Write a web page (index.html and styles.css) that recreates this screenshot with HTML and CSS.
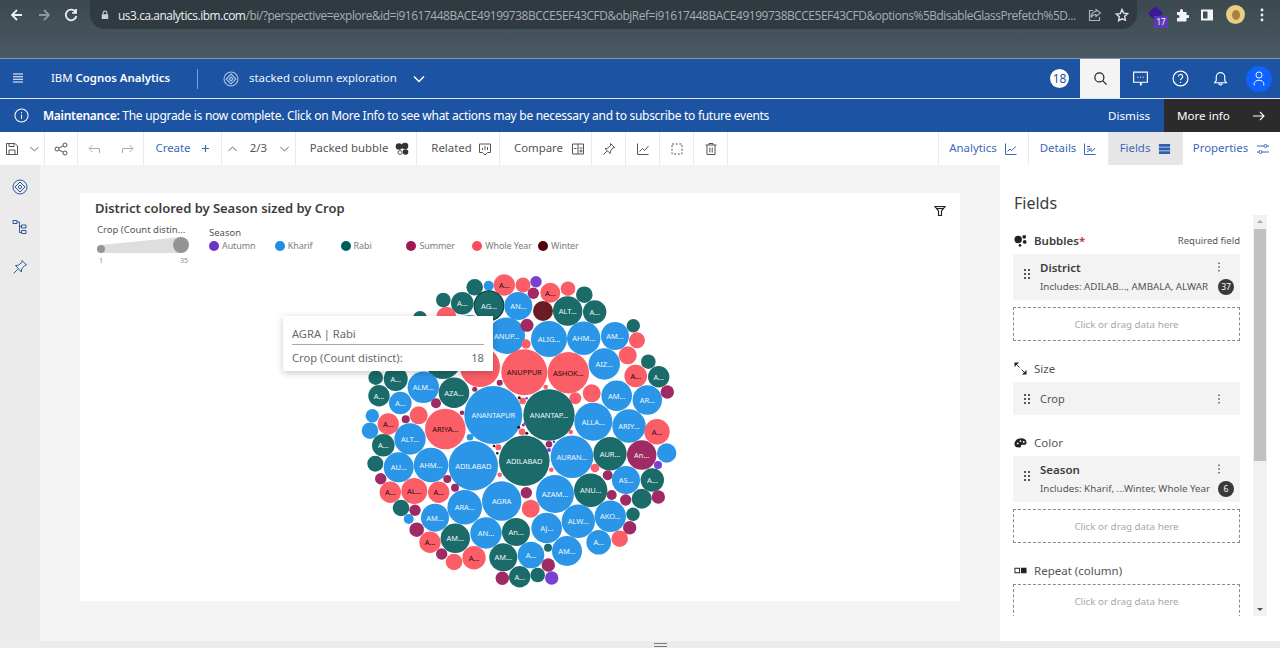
FILE: index.html
```html
<!DOCTYPE html>
<html lang="en">
<head>
<meta charset="utf-8">
<title>IBM Cognos Analytics</title>
<link rel="stylesheet" href="styles.css">
</head>
<body>
<div class="browser">
  <div class="browser-top">
    <div class="nav">
      <svg class="nav-ic" viewBox="0 0 16 16"><path d="M13 8H3.500M8 3 3 8l5 5"/></svg>
      <svg class="nav-ic dim" viewBox="0 0 16 16"><path d="M3 8h9.500M8 3l5 5-5 5"/></svg>
      <svg class="nav-ic" viewBox="0 0 16 16"><path d="M12.800 5.500A5.300 5.300 0 1 0 13.300 9M13 2v3.800H9.200"/></svg>
    </div>
    <div class="address">
      <svg class="lock" viewBox="0 0 10 12"><path d="M2 5V3.500a3 3 0 0 1 6 0V5h1v6H1V5zm1.300 0h3.400V3.500a1.700 1.700 0 0 0-3.400 0z"/></svg>
      <span class="url"><b>us3.ca.analytics.ibm.com</b>/bi/?perspective=explore&amp;id=i91617448BACE49199738BCCE5EF43CFD&amp;objRef=i91617448BACE49199738BCCE5EF43CFD&amp;options%5BdisableGlassPrefetch%5D...</span>
      <svg class="addr-ic" viewBox="0 0 14 14"><path d="M8 1.500 12.500 5 8 8.500V6.500C5.500 6.500 4 7.500 3 9.500 3 6 5 3.700 8 3.500zM5 2.500H1.500v10h10V9"/></svg>
      <svg class="addr-ic star" viewBox="0 0 14 14"><path d="m7 1.500 1.700 3.600 3.800.5-2.800 2.700.7 3.900L7 10.800l-3.400 1.900.7-3.900-2.800-2.700 3.800-.5z"/></svg>
    </div>
    <div class="ext">
      <div class="ext-a"><span class="ext-shape"></span><span class="ext-badge">17</span></div>
      <svg class="ext-ic puzzle" viewBox="0 0 14 14"><path d="M5 2.500a1.500 1.500 0 0 1 3 0V4h3.500v3H13a1.500 1.500 0 0 1 0 3h-1.500v3.500H2V10h1a1.500 1.500 0 0 0 0-3H2V4h3z"/></svg>
      <svg class="ext-ic side" viewBox="0 0 14 14"><path d="M1 1.500h12v11H1zM3 3.500v7h4.500v-7z" fill-rule="evenodd"/></svg>
      <span class="avatar-y"><span class="avatar-y-in"></span></span>
      <svg class="ext-ic kebab-w" viewBox="0 0 4 14"><circle cx="2" cy="2" r="1.400"/><circle cx="2" cy="7" r="1.400"/><circle cx="2" cy="12" r="1.400"/></svg>
    </div>
  </div>
</div>

<header class="appbar">
  <svg class="ic-w burger" viewBox="0 0 12 10"><path d="M1 1h10M1 3.700h10M1 6.300h10M1 9h10"/></svg>
  <div class="brand">IBM <b>Cognos Analytics</b></div>
  <span class="brand-sep"></span>
  <svg class="ic-w explore" viewBox="0 0 16 16"><circle cx="8" cy="8" r="7"/><path d="m8 3 5 5-5 5-5-5zM8 6l2 2-2 2-2-2z"/></svg>
  <span class="doc-name">stacked column exploration</span>
  <svg class="ic-w doc-chev" viewBox="0 0 12 8"><path d="m1 1.500 5 5 5-5"/></svg>
  <div class="bar-right">
    <span class="count">18</span>
    <span class="search"><svg class="ic-k" viewBox="0 0 16 16"><circle cx="6.800" cy="6.800" r="4.800"/><path d="m10.300 10.300 4.200 4.200"/></svg></span>
    <span class="bar-btn"><svg class="ic-w" viewBox="0 0 16 16"><path d="M1.500 2h13v9.500H9.500l-1.500 3v-3H1.500z"/><path d="M5 6.800h1M7.500 6.800h1M10 6.800h1"/></svg></span>
    <span class="bar-btn"><svg class="ic-w" viewBox="0 0 16 16"><circle cx="8" cy="8" r="7"/><path d="M6 6.200a2 2 0 1 1 3 1.700c-.7.400-1 .8-1 1.600M8 11v1.300"/></svg></span>
    <span class="bar-btn"><svg class="ic-w" viewBox="0 0 16 16"><path d="M2.500 12h11l-1.500-2V6.500a4 4 0 0 0-8 0V10zM6.500 12.500a1.500 1.500 0 0 0 3 0"/></svg></span>
    <span class="user"><svg class="ic-w" viewBox="0 0 16 18"><circle cx="8" cy="5" r="3.500"/><path d="M2.500 17v-2a5.500 4 0 0 1 11 0v2"/></svg></span>
  </div>
</header>

<div class="notice">
  <svg class="ic-w notice-ic" viewBox="0 0 16 16"><circle cx="8" cy="8" r="7"/><path d="M8 7v4.500M8 4.200v1.300"/></svg>
  <p class="notice-text"><b>Maintenance:</b> The upgrade is now complete. Click on More Info to see what actions may be necessary and to subscribe to future events</p>
  <span class="dismiss">Dismiss</span>
  <span class="more">More info<svg class="ic-w more-ar" viewBox="0 0 12 10"><path d="M0 5h11M7 1l4 4-4 4"/></svg></span>
</div>

<nav class="toolbar">
  <div class="cell c-save">
    <svg class="ic-g" viewBox="0 0 14 14"><path d="M1.500 1.500h8.500l2.500 2.500v8.500h-11zM4 1.500v3h5v-3M4 12.500V8h6v4.500"/></svg>
    <svg class="ic-g chev" viewBox="0 0 12 8"><path d="m1.500 2 4.500 4 4.500-4"/></svg>
  </div>
  <div class="cell c-share"><svg class="ic-d" viewBox="0 0 14 14"><circle cx="3" cy="7" r="2"/><circle cx="11" cy="3" r="2"/><circle cx="11" cy="11" r="2"/><path d="m4.800 6.100 4.400-2.200M4.800 7.900l4.400 2.200"/></svg></div>
  <div class="cell c-undo">
    <svg class="ic-l" viewBox="0 0 14 12"><path d="M12.500 10V5.500h-10M5.500 2 2 5.500 5.500 9"/></svg>
    <svg class="ic-l" viewBox="0 0 14 12"><path d="M1.500 10V5.500h10M8.500 2 12 5.500 8.500 9"/></svg>
  </div>
  <div class="cell c-create"><span class="link">Create</span><svg class="ic-b plus" viewBox="0 0 10 10"><path d="M5 1v8M1 5h8"/></svg></div>
  <div class="cell c-page">
    <svg class="ic-g chev" viewBox="0 0 12 8"><path d="m1.500 6 4.500-4 4.500 4"/></svg>
    <span class="txt">2/3</span>
    <svg class="ic-g chev" viewBox="0 0 12 8"><path d="m1.500 2 4.500 4 4.500-4"/></svg>
  </div>
  <div class="cell c-bubble"><span class="txt">Packed bubble</span><svg class="bub-ic" viewBox="0 0 14 14"><circle cx="4" cy="4.500" r="3.300"/><circle cx="10" cy="4" r="3.300"/><circle cx="10.500" cy="10" r="2.800"/><circle cx="5" cy="10.500" r="2" class="bub-hole"/></svg></div>
  <div class="cell c-related"><span class="txt">Related</span><svg class="ic-d" viewBox="0 0 14 14"><path d="M1.500 2h11v8.500h-3L7 13l-2.500-2.500h-3z"/><path d="M4.500 8V6M7 8V4M9.500 8V5"/></svg></div>
  <div class="cell c-compare"><span class="txt">Compare</span><svg class="ic-d" viewBox="0 0 14 14"><path d="M1.500 2h11v10h-11zM7 2v10M3 6.500h2.500M8.500 6h3M8.500 9h3M10 7.500v3"/></svg></div>
  <div class="cell c-icon"><svg class="ic-d" viewBox="0 0 14 14"><path d="m8.500 1.500 4 4-1.500.5-2.500 3-.3 2.500L3 6.500 5.500 6.200l3-2.500zM5 9l-3.500 3.500"/></svg></div>
  <div class="cell c-icon"><svg class="ic-d" viewBox="0 0 14 14"><path d="M1.500 1.500v11h11M3.500 9.500 6.500 6.500l2 2 4-4.500"/></svg></div>
  <div class="cell c-icon"><svg class="ic-d dash" viewBox="0 0 14 14"><path d="M2 2h10v10H2z"/></svg></div>
  <div class="cell c-icon"><svg class="ic-d" viewBox="0 0 14 14"><path d="M1.500 3h11M5 3V1.500h4V3M3 3v9.500h8V3M5.800 5.500v5M8.200 5.500v5"/></svg></div>
  <div class="spacer"></div>
  <div class="cell c-tab c-analytics"><span class="link">Analytics</span><svg class="ic-b" viewBox="0 0 14 14"><path d="M1.500 1.500v11h11M3.500 9.500 6 7l1.500 1.500 4.500-4"/></svg></div>
  <div class="cell c-tab c-details"><span class="link">Details</span><svg class="ic-b" viewBox="0 0 14 14"><path d="M1.500 1.500v11h11M4 4.500h3M4 7h5M4 10l3-2 2 1.500 3-3.500"/></svg></div>
  <div class="cell c-tab c-fields active"><span class="link">Fields</span><svg class="fields-ic" viewBox="0 0 14 14"><path d="M1 1.500h12v3H1zM1 5.500h12v3H1zM1 9.500h12v3H1z"/></svg></div>
  <div class="cell c-tab c-props"><span class="link">Properties</span><svg class="ic-b" viewBox="0 0 14 14"><path d="M1 4h7M11 4h2M1 10h2M6 10h7"/><circle cx="9.500" cy="4" r="1.500"/><circle cx="4.500" cy="10" r="1.500"/></svg></div>
</nav>

<main class="workspace">
  <aside class="rail">
    <svg class="rail-ic" viewBox="0 0 16 16"><circle cx="8" cy="8" r="7"/><path d="m8 3 5 5-5 5-5-5zM8 6l2 2-2 2-2-2z"/></svg>
    <svg class="rail-ic" viewBox="0 0 16 16"><path d="M1 1.500h4v3H1zM9.500 6h4.500v3H9.500zM9.500 11.500h4.500v3H9.500zM5 3h2.500v10.500h2M7.500 7.500h2"/></svg>
    <svg class="rail-ic" viewBox="0 0 16 16"><path d="m10 1.500 4.500 4.500-1.800.5-3 3.500-.3 3L3.500 6.500l3-.3 3.500-3zM5.800 10.200 1.500 14.500"/></svg>
  </aside>

  <section class="canvas">
    <div class="card">
      <div class="card-head">
        <h2 class="card-title">District colored by Season sized by Crop</h2>
        <svg class="filter-ic" viewBox="0 0 12 12"><path d="M1 1.500h10L7.500 6v4.500h-3V6z"/><path d="M2.500 3.500h7"/></svg>
      </div>
      <div class="legend">
        <div class="size-legend">
          <div class="size-title">Crop (Count distin...</div>
          <svg class="size-shape" viewBox="0 0 92 20"><path class="wedge" d="M4 8 84 0V16H4z"/><circle class="knob" cx="4" cy="12" r="4"/><circle class="knob" cx="84" cy="8" r="8"/></svg>
          <div class="size-ticks"><span>1</span><span>35</span></div>
        </div>
        <div class="color-legend">
          <div class="color-title">Season</div>
          <div class="color-items">
            <span class="item"><i class="dot d-v"></i>Autumn</span>
            <span class="item"><i class="dot d-b"></i>Kharif</span>
            <span class="item"><i class="dot d-g"></i>Rabi</span>
            <span class="item"><i class="dot d-m"></i>Summer</span>
            <span class="item"><i class="dot d-r"></i>Whole Year</span>
            <span class="item"><i class="dot d-d"></i>Winter</span>
          </div>
        </div>
      </div>
      <svg class="plot" viewBox="80 270 880 331">
        <circle class="r" cx="504.300" cy="285" r="10.700"/><circle class="r" cx="523" cy="285" r="7.500"/><circle class="v" cx="536" cy="281.700" r="5.700"/><circle class="g" cx="474.700" cy="287.300" r="8.300"/><circle class="b" cx="488.700" cy="285.700" r="5"/><circle class="m" cx="533.300" cy="293.300" r="5.700"/><circle class="r" cx="550.300" cy="292.700" r="10"/><circle class="r" cx="568" cy="288.700" r="7.300"/><circle class="g" cx="584.300" cy="294.700" r="8.300"/><circle class="g" cx="443.300" cy="300" r="7.300"/><circle class="g" cx="462.300" cy="303.300" r="11.300"/><circle class="g sel" cx="489" cy="305.700" r="14.800"/><circle class="b" cx="518.300" cy="306" r="14"/><circle class="d" cx="543" cy="311" r="10"/><circle class="g" cx="567.700" cy="311" r="14.700"/><circle class="g" cx="594.700" cy="312" r="11.700"/><circle class="r" cx="446.300" cy="316.700" r="10"/><circle class="g" cx="420" cy="318" r="7"/><circle class="b" cx="470" cy="330" r="15"/><circle class="b" cx="506.700" cy="335.700" r="18.300"/><circle class="m" cx="527" cy="325.300" r="6.500"/><circle class="b" cx="549" cy="339" r="18"/><circle class="b" cx="583.700" cy="338.300" r="16.700"/><circle class="b" cx="615" cy="336" r="14"/><circle class="g" cx="633.300" cy="325.700" r="6.700"/><circle class="r" cx="637" cy="340.300" r="8"/><circle class="r" cx="526" cy="344" r="4.700"/><circle class="r" cx="627.700" cy="355.300" r="9"/><circle class="b" cx="604.300" cy="364" r="15.700"/><circle class="g" cx="648.300" cy="361.700" r="7.300"/><circle class="r" cx="635.700" cy="376" r="11.300"/><circle class="g" cx="658.700" cy="376.700" r="10.700"/><circle class="m" cx="667.300" cy="392" r="6.700"/><circle class="r" cx="524.300" cy="372.300" r="23"/><circle class="r" cx="568.300" cy="372.700" r="20.700"/><circle class="r" cx="480" cy="367" r="20"/><circle class="g" cx="443" cy="361" r="18"/><circle class="m" cx="499.700" cy="382.700" r="3"/><circle class="m" cx="474.700" cy="389.300" r="2.500"/><circle class="r" cx="545.700" cy="387" r="2.300"/><circle class="r" cx="591.700" cy="393.300" r="9"/><circle class="r" cx="575.300" cy="398.300" r="6"/><circle class="b" cx="616.700" cy="395.700" r="15.300"/><circle class="b" cx="647.300" cy="400" r="14.700"/><circle class="b" cx="493.300" cy="415" r="29"/><circle class="g" cx="549" cy="415" r="25.700"/><circle class="b" cx="593.300" cy="421.700" r="19"/><circle class="b" cx="629" cy="426" r="16.700"/><circle class="r" cx="657" cy="431.700" r="12.700"/>
        <circle class="g" cx="375.700" cy="377.700" r="7.300"/><circle class="g" cx="395.700" cy="379" r="12"/><circle class="b" cx="423.300" cy="387.300" r="15.700"/><circle class="g" cx="454" cy="392.700" r="15.300"/><circle class="g" cx="379" cy="395.700" r="10.700"/><circle class="b" cx="400.300" cy="403" r="11.300"/><circle class="m" cx="436" cy="403.300" r="5"/><circle class="r" cx="418.700" cy="415.300" r="9"/><circle class="m" cx="405.700" cy="419.300" r="4"/><circle class="b" cx="372.300" cy="415.700" r="6.700"/><circle class="r" cx="388.300" cy="424" r="10.700"/><circle class="b" cx="370" cy="430.700" r="8.300"/><circle class="b" cx="410" cy="439" r="15.700"/><circle class="r" cx="445.300" cy="429" r="20.300"/><circle class="m" cx="462" cy="412.700" r="2.300"/><circle class="g" cx="383.300" cy="445.300" r="11.300"/><circle class="b" cx="470" cy="437.300" r="3.300"/>
        <circle class="b" cx="473.300" cy="465.700" r="24.700"/><circle class="g" cx="524.300" cy="460.700" r="25.300"/><circle class="b" cx="572" cy="456.700" r="21.300"/><circle class="g" cx="610" cy="453.700" r="16.700"/><circle class="m" cx="641.700" cy="455" r="14.700"/><circle class="b" cx="666.700" cy="453" r="9.700"/><circle class="v" cx="658" cy="465" r="4"/><circle class="r" cx="595" cy="468" r="4.300"/><circle class="m" cx="607.700" cy="475.300" r="5"/><circle class="b" cx="626" cy="480" r="14"/><circle class="g" cx="652.300" cy="480" r="11.700"/><circle class="g" cx="375.300" cy="463.700" r="8"/><circle class="b" cx="398.700" cy="467.300" r="15"/><circle class="b" cx="431" cy="465" r="17.300"/><circle class="m" cx="380.700" cy="478.700" r="5.700"/><circle class="m" cx="447.300" cy="479" r="4"/><circle class="m" cx="455" cy="487.700" r="4"/><circle class="r" cx="499.700" cy="474.700" r="2.300"/><circle class="r" cx="551.300" cy="469.700" r="2.300"/><circle class="r" cx="390.300" cy="492.300" r="10.700"/><circle class="r" cx="414.300" cy="491" r="13"/><circle class="r" cx="438.700" cy="492.300" r="10.700"/><circle class="b" cx="464.700" cy="507.300" r="17.300"/><circle class="b" cx="501.700" cy="501" r="19.700"/><circle class="m" cx="526.300" cy="492.700" r="5.700"/><circle class="b" cx="555" cy="494" r="19"/><circle class="g" cx="590.700" cy="490.300" r="16.700"/><circle class="m" cx="611.700" cy="495" r="5"/><circle class="m" cx="625.700" cy="500" r="5.700"/><circle class="g" cx="641.700" cy="498.700" r="10"/><circle class="m" cx="658.300" cy="497" r="6.700"/><circle class="r" cx="530.700" cy="508.700" r="9"/><circle class="g" cx="401" cy="508" r="8.300"/><circle class="m" cx="415" cy="510.300" r="5.700"/><circle class="b" cx="408.700" cy="519" r="5"/><circle class="b" cx="435" cy="517.700" r="14"/><circle class="b" cx="546.700" cy="528" r="15.300"/><circle class="b" cx="578.300" cy="521.300" r="16.700"/><circle class="b" cx="610.300" cy="516.300" r="15.700"/><circle class="g" cx="633" cy="514.300" r="6.700"/><circle class="m" cx="629.700" cy="527.700" r="6.700"/><circle class="r" cx="619.700" cy="538.700" r="8.300"/><circle class="b" cx="598.700" cy="542.300" r="12.300"/><circle class="m" cx="416.700" cy="529.700" r="7.300"/><circle class="g" cx="455.300" cy="538.300" r="14.700"/><circle class="b" cx="486" cy="533" r="15.700"/><circle class="g" cx="516" cy="532" r="14"/><circle class="r" cx="430" cy="542.300" r="10.700"/><circle class="m" cx="441.700" cy="554" r="5.700"/><circle class="r" cx="454" cy="562" r="8.300"/><circle class="r" cx="474" cy="557.700" r="11.700"/><circle class="g" cx="503.300" cy="557.300" r="14"/><circle class="b" cx="531" cy="555" r="13.300"/><circle class="g" cx="548" cy="547.700" r="4"/><circle class="b" cx="567" cy="551" r="15"/><circle class="m" cx="548.300" cy="565" r="6.700"/><circle class="g" cx="537.700" cy="575" r="7.300"/><circle class="v" cx="551.700" cy="578" r="6.700"/><circle class="g" cx="519.700" cy="576.700" r="10.700"/><circle class="m" cx="502.300" cy="578.300" r="6.700"/>
        <circle class="r" cx="522.700" cy="401" r="3.300"/><circle class="k" cx="519.300" cy="397.700" r="1.500"/><circle class="v" cx="526.700" cy="398.300" r="1.300"/><circle class="r" cx="522" cy="431.700" r="3.300"/><circle class="k" cx="518.700" cy="427.300" r="1.500"/><circle class="k" cx="526.700" cy="433.300" r="1.500"/><circle class="m" cx="523.300" cy="425" r="1.500"/><circle class="v" cx="525" cy="423" r="1.300"/><circle class="r" cx="498.300" cy="447.300" r="3"/><circle class="k" cx="494" cy="446" r="1.300"/><circle class="k" cx="497.300" cy="453.300" r="1.300"/><circle class="r" cx="570.700" cy="432" r="2.300"/><circle class="m" cx="549" cy="444.300" r="3.300"/><circle class="v" cx="549" cy="450" r="2"/><circle class="v" cx="554" cy="441.700" r="1.300"/>
        <g class="lk">
          <text x="504.300" y="285">A...</text><text x="550.300" y="292.700">A...</text><text x="524.300" y="372.300">ANUPPUR</text><text x="568.300" y="372.700">ASHOK...</text><text x="635.700" y="376">A...</text><text x="445.300" y="429">ARIYA...</text><text x="388.300" y="424">A...</text><text x="657" y="431.700">A...</text><text x="390.300" y="492.300">A...</text><text x="414.300" y="491">AL...</text><text x="438.700" y="492.300">A...</text><text x="430" y="542.300">A...</text><text x="474" y="557.700">A...</text>
        </g>
        <g class="lw">
          <text x="462.300" y="303.300">A...</text><text x="489" y="305.700">AG...</text><text x="518.300" y="306">AN...</text><text x="567.700" y="311">ALT...</text><text x="594.700" y="312">A...</text><text x="549" y="339">ALIG...</text><text x="583.700" y="338.300">AHM...</text><text x="615" y="336">AM...</text><text x="604.300" y="364">AIZ...</text><text x="658.700" y="376.700">A...</text><text x="616.700" y="395.700">AM...</text><text x="647.300" y="400">AR...</text><text x="493.300" y="415">ANANTAPUR</text><text x="549" y="415">ANANTAP...</text><text x="593.300" y="421.700">ALLA...</text><text x="629" y="426">ARIY...</text><text x="395.700" y="379">A...</text><text x="423.300" y="387.300">ALM...</text><text x="454" y="392.700">AZA...</text><text x="379" y="395.700">A...</text><text x="400.300" y="403">A...</text><text x="410" y="439">ALT...</text><text x="383.300" y="445.300">A...</text><text x="473.300" y="465.700">ADILABAD</text><text x="524.300" y="460.700">ADILABAD</text><text x="572" y="456.700">AURAN...</text><text x="610" y="453.700">AUR...</text><text x="641.700" y="455">An...</text><text x="626" y="480">AS...</text><text x="652.300" y="480">A...</text><text x="398.700" y="467.300">AU...</text><text x="431" y="465">AHM...</text><text x="464.700" y="507.300">ARA...</text><text x="501.700" y="501">AGRA</text><text x="555" y="494">AZAM...</text><text x="590.700" y="490.300">ANU...</text><text x="435" y="517.700">AM...</text><text x="546.700" y="528">AJ...</text><text x="578.300" y="521.300">ALW...</text><text x="610.300" y="516.300">AKO...</text><text x="598.700" y="542.300">A...</text><text x="455.300" y="538.300">AM...</text><text x="486" y="533">AN...</text><text x="516" y="532">An...</text><text x="503.300" y="557.300">AM...</text><text x="531" y="555">A...</text><text x="567" y="551">AM...</text><text x="519.700" y="576.700">A...</text>
        </g>
        <text class="lw-small" x="506.700" y="335.700">ANUP...</text>
      </svg>
      <div class="tooltip">
        <div class="tip-title">AGRA | Rabi</div>
        <div class="tip-row"><span>Crop (Count distinct):</span><span>18</span></div>
      </div>
    </div>
  </section>

  <aside class="panel">
    <h2 class="panel-title">Fields</h2>
    <div class="panel-body">
      <div class="slots">
        <div class="group">
          <div class="slot-head">
            <svg class="slot-ic" viewBox="0 0 14 14"><circle cx="4.500" cy="6" r="4"/><circle cx="11" cy="3" r="2"/><circle cx="11.500" cy="8.500" r="2"/><circle cx="6.500" cy="12.300" r="1.500"/></svg>
            <span class="slot-name strong">Bubbles<em class="req">*</em></span>
            <span class="slot-note">Required field</span>
          </div>
          <div class="pill tall">
            <svg class="grip" viewBox="0 0 6 10"><path d="M0 0h2v2H0zM4 0h2v2H4zM0 4h2v2H0zM4 4h2v2H4zM0 8h2v2H0zM4 8h2v2H4z"/></svg>
            <div class="pill-main">
              <div class="pill-top"><b class="pill-name">District</b><svg class="kebab" viewBox="0 0 4 12"><circle cx="2" cy="1.500" r="1"/><circle cx="2" cy="6" r="1"/><circle cx="2" cy="10.500" r="1"/></svg></div>
              <div class="pill-sub"><span>Includes: ADILAB..., AMBALA, ALWAR</span><span class="badge">37</span></div>
            </div>
          </div>
          <div class="drop">Click or drag data here</div>
        </div>
        <div class="group">
          <div class="slot-head">
            <svg class="slot-ic" viewBox="0 0 14 14"><path d="M.5.500h5L.5 5.500zM13.500 13.500h-5l5-5z"/><path class="slot-line" d="m3 3 3 3M11 11 8 8"/></svg>
            <span class="slot-name">Size</span>
          </div>
          <div class="pill short">
            <svg class="grip" viewBox="0 0 6 10"><path d="M0 0h2v2H0zM4 0h2v2H4zM0 4h2v2H0zM4 4h2v2H4zM0 8h2v2H0zM4 8h2v2H4z"/></svg>
            <div class="pill-top wide"><span class="pill-plain">Crop</span><svg class="kebab" viewBox="0 0 4 12"><circle cx="2" cy="1.500" r="1"/><circle cx="2" cy="6" r="1"/><circle cx="2" cy="10.500" r="1"/></svg></div>
          </div>
        </div>
        <div class="group">
          <div class="slot-head">
            <svg class="slot-ic" viewBox="0 0 14 14"><path d="M.5 8.500C.5 5 3.500 2.500 8 2.500c3.500 0 5.500 2 5.500 4.500 0 1.500-1 2.500-2.500 2.500H9c-1 0-1.500.7-1.500 1.500 0 .7-.5 1.500-2 1.500C2.500 12.500.5 11 .5 8.500z"/><circle class="slot-hole" cx="4" cy="8" r="1"/><circle class="slot-hole" cx="7" cy="5.500" r="1"/><circle class="slot-hole" cx="10.500" cy="6.500" r="1"/></svg>
            <span class="slot-name">Color</span>
          </div>
          <div class="pill tall">
            <svg class="grip" viewBox="0 0 6 10"><path d="M0 0h2v2H0zM4 0h2v2H4zM0 4h2v2H0zM4 4h2v2H4zM0 8h2v2H0zM4 8h2v2H4z"/></svg>
            <div class="pill-main">
              <div class="pill-top"><b class="pill-name">Season</b><svg class="kebab" viewBox="0 0 4 12"><circle cx="2" cy="1.500" r="1"/><circle cx="2" cy="6" r="1"/><circle cx="2" cy="10.500" r="1"/></svg></div>
              <div class="pill-sub"><span>Includes: Kharif, ...Winter, Whole Year</span><span class="badge">6</span></div>
            </div>
          </div>
          <div class="drop">Click or drag data here</div>
        </div>
        <div class="group">
          <div class="slot-head">
            <svg class="slot-ic" viewBox="0 0 14 14"><path d="M.5 4h6v6h-6zM1.500 5v4h4V5z" fill-rule="evenodd"/><path d="M7.500 4h6v6h-6z"/></svg>
            <span class="slot-name">Repeat (column)</span>
          </div>
          <div class="drop">Click or drag data here</div>
        </div>
      </div>
      <div class="scrollbar">
        <span class="arrow up"></span>
        <span class="thumb"></span>
        <span class="track"></span>
        <span class="arrow down"></span>
      </div>
    </div>
  </aside>
</main>

<footer class="dock"><span class="dock-handle"></span></footer>
</body>
</html>
```

FILE: styles.css
```css
* { box-sizing: border-box; }
html, body { margin: 0; height: 100%; }
body {
  width: 1280px;
  height: 648px;
  overflow: hidden;
  font-family: "Noto Sans", "Open Sans", sans-serif;
  font-size: 12px;
  color: #3d3d3d;
  background: #f4f4f4;
}
h2, p { margin: 0; }
svg { display: block; flex: none; }

/* Browser chrome */
.browser { height: 59px; background: linear-gradient(#3c494f, #4a5a63); border-bottom: 1px solid #8296a8; }
.browser-top { display: flex; align-items: flex-start; height: 29px; }
.nav { display: flex; width: 90px; height: 29px; align-items: center; padding-left: 9px; gap: 11px; }
.nav-ic { width: 16px; height: 16px; fill: none; stroke: #eef1f2; stroke-width: 1.800; }
.nav-ic.dim { stroke: #8b979d; }
.address {
  display: flex; align-items: center; width: 1047px; height: 29px; padding: 0 8px 0 11px;
  background: #303b41; border-radius: 0 0 15px 15px;
}
.lock { width: 8px; height: 10px; fill: #c9d0d3; }
.url { margin-left: 9px; width: 964px; font: 11.900px "Open Sans", sans-serif; letter-spacing: -.43px; color: #a5aeb3; white-space: nowrap; overflow: hidden; }
.url b { font-weight: 400; color: #eef1f2; }
.addr-ic { width: 14px; height: 14px; fill: none; stroke: #aeb7bb; stroke-width: 1.100; margin-left: 6px; }
.addr-ic.star { margin-left: 13px; stroke: #dfe3e5; stroke-width: 1.400; }
.ext { display: flex; flex: 1; align-items: center; height: 29px; padding-left: 11px; }
.ext-a { position: relative; width: 22px; height: 22px; }
.ext-shape { position: absolute; left: 2px; top: 4px; width: 11px; height: 11px; background: #3a1a96; transform: rotate(45deg); border-radius: 2px; }
.ext-badge { position: absolute; left: 6px; top: 12px; width: 14px; height: 12px; background: #5b3bb5; color: #fff; font-size: 8px; line-height: 12px; text-align: center; }
.ext-ic { width: 14px; height: 14px; fill: #f2f4f5; }
.ext-ic.puzzle { margin-left: 5px; }
.ext-ic.side { margin-left: 11px; }
.avatar-y { display: flex; align-items: center; justify-content: center; width: 19px; height: 19px; margin-left: 12px; border-radius: 50%; background: #e9cf83; }
.avatar-y-in { width: 8px; height: 10px; background: #a9823f; border-radius: 50%; }
.ext-ic.kebab-w { width: 4px; margin-left: 15px; }

/* App bar */
.appbar { display: flex; align-items: center; height: 39px; background: #1d53a3; color: #fff; }
.ic-w { fill: none; stroke: #fff; stroke-width: 1.100; }
.burger { width: 12px; height: 10px; margin-left: 12px; margin-top: -2px; }
.brand { margin-left: 27px; font-size: 11.400px; width: 119px; white-space: nowrap; margin-top: -2px; }
.brand b { font-weight: 600; }
.brand-sep { width: 1px; height: 20px; margin-left: 27px; background: #7d9fd0; }
.explore { width: 16px; height: 16px; margin-left: 25px; stroke: #a9c3ea; }
.doc-name { margin-left: 10px; width: 160px; white-space: nowrap; font-size: 11.400px; color: #eef3fa; margin-top: -2px; }
.doc-chev { width: 12px; height: 8px; margin-left: 4px; stroke-width: 1.500; }
.bar-right { display: flex; align-items: center; margin-left: auto; height: 39px; }
.count { display: flex; align-items: center; justify-content: center; width: 19px; height: 19px; border-radius: 50%; background: #fff; color: #1d53a3; font-size: 12px; margin-right: 11px; }
.search { display: flex; align-items: center; justify-content: center; width: 40px; height: 39px; background: #f4f4f4; }
.ic-k { width: 15px; height: 15px; fill: none; stroke: #222; stroke-width: 1.300; }
.bar-btn { display: flex; align-items: center; justify-content: center; width: 40px; }
.bar-btn .ic-w { width: 17px; height: 17px; }
.user { display: flex; align-items: center; justify-content: center; width: 26px; height: 26px; margin: 0 8px 0 6px; border-radius: 50%; background: #0f62fe; }
.user .ic-w { width: 14px; height: 17px; }

/* Notice */
.notice { display: flex; align-items: center; height: 34px; background: #1d53a3; border-top: 1px solid #dfe7f3; color: #fff; }
.notice-ic { width: 15px; height: 15px; margin-left: 14px; }
.notice-text { margin-left: 14px; font-size: 12px; white-space: nowrap; letter-spacing: -.28px; }
.notice-text b { font-weight: 600; }
.dismiss { margin-left: auto; margin-right: 14px; font-size: 11.600px; }
.more { display: flex; align-items: center; justify-content: space-between; width: 116px; height: 33px; padding: 0 15px 0 13px; background: #2b2b2b; font-size: 11.600px; }
.more-ar { width: 12px; height: 10px; }

/* Toolbar */
.toolbar { display: flex; height: 33px; background: #fff; color: #555; font-size: 11.400px; }
.cell { display: flex; align-items: center; justify-content: center; border-right: 1px solid #eaeaea; }
.spacer { flex: 1; border-right: 1px solid #eaeaea; }
.txt { color: #555; margin-top: -2px; }
.link { color: #3b68b5; margin-top: -2px; }
.ic-g, .ic-d, .ic-l, .ic-b { width: 14px; height: 14px; fill: none; stroke-width: 1; }
.ic-g { stroke: #555; }
.ic-d { stroke: #555; }
.ic-l { stroke: #a9a9a9; }
.ic-b { stroke: #3b68b5; }
.ic-g.chev { width: 11px; height: 8px; }
.ic-d.dash { stroke-dasharray: 2 1.700; }
.plus { width: 9px; height: 9px; stroke-width: 1.300; }
.c-save { width: 45px; gap: 10px; }
.c-share { width: 33px; }
.c-undo { width: 66px; gap: 20px; }
.c-create { width: 78px; gap: 10px; }
.c-page { width: 74px; justify-content: space-between; padding: 0 5px; }
.c-bubble { width: 121px; gap: 7px; padding-left: 7px; }
.bub-ic { width: 14px; height: 14px; fill: #333; }
.bub-hole { fill: #fff; stroke: #333; stroke-width: .8; }
.c-related { width: 83px; gap: 6px; padding-left: 7px; }
.c-compare { width: 92px; gap: 8px; padding-left: 8px; }
.c-icon { width: 34px; }
.c-tab { gap: 7px; }
.c-analytics { width: 90px; }
.c-details { width: 80px; }
.c-fields { width: 74px; gap: 8px; }
.c-props { width: 97px; border-right: 0; gap: 8px; }
.active { background: #e6e6e6; }
.fields-ic { width: 13px; height: 14px; fill: #2f5fb3; }

/* Work area */
.workspace { display: flex; height: 476px; }
.rail { display: flex; flex-direction: column; align-items: center; width: 40px; padding-top: 14px; gap: 24px; background: #ebebeb; }
.rail-ic { width: 16px; height: 16px; fill: none; stroke: #2e5a99; stroke-width: 1; }
.canvas { display: flex; width: 960px; padding: 28px 40px 40px; }
.card { position: relative; display: flex; flex-direction: column; width: 880px; background: #fff; }
.card-head { display: flex; justify-content: space-between; align-items: center; height: 30px; padding: 0 14px 1px 15px; }
.card-title { font-size: 13px; font-weight: 600; color: #3d3d3d; letter-spacing: -.03px; }
.filter-ic { width: 12px; height: 12px; fill: none; stroke: #222; stroke-width: 1.200; margin-top: 7px; }
.legend { display: flex; height: 47px; padding-left: 17px; color: #6b6b6b; }
.size-legend { width: 112px; }
.size-title { width: 92px; font-size: 9.500px; line-height: 14px; color: #555; white-space: nowrap; }
.size-shape { width: 92px; height: 20px; }
.wedge { fill: #dedede; }
.knob { fill: #949494; }
.size-ticks { display: flex; justify-content: space-between; width: 92px; padding: 0 1px 0 2px; font-size: 7px; line-height: 8px; color: #8a8a8a; }
.color-legend { padding-top: 3px; }
.color-title { font-size: 9.500px; line-height: 14px; color: #555; }
.color-items { display: flex; }
.item { display: flex; align-items: center; width: 65.800px; gap: 3px; font-size: 9px; line-height: 11px; letter-spacing: -.1px; color: #7c7c7c; white-space: nowrap; }
.dot { width: 10px; height: 10px; border-radius: 50%; }
.d-v { background: #6e32c9; }
.d-b { background: #1b8de8; }
.d-g { background: #005d5d; }
.d-m { background: #9f1853; }
.d-r { background: #fa4d56; }
.d-d { background: #520408; }
.plot { width: 880px; height: 331px; }
.b { fill: #2b96e8; }
.g { fill: #1a6b69; }
.r { fill: #fb5e67; }
.m { fill: #a02a63; }
.v { fill: #7a3fd3; }
.d { fill: #6b1c22; }
.k { fill: #33161c; }
.sel { stroke: #0b3f3e; stroke-width: 1.200; }
.lk text, .lw text, .lw-small { font-size: 7.500px; text-anchor: middle; dominant-baseline: central; letter-spacing: -.05px; }
.lk text { fill: #2a0a0e; }
.lw text, .lw-small { fill: #eef7fb; }
.tooltip { position: absolute; left: 203px; top: 123px; width: 210px; height: 55px; padding: 9px 9px 0; background: #fff; box-shadow: 0 2px 7px rgba(0,0,0,.22); font-size: 11.200px; color: #6a6a6a; }
.tip-title { height: 20px; line-height: 18px; border-bottom: 1px solid #a8a8a8; letter-spacing: -.05px; }
.tip-row { display: flex; justify-content: space-between; margin-top: 5px; line-height: 15px; }

/* Fields panel */
.panel { width: 280px; padding-top: 26px; background: #fff; }
.panel-title { height: 24px; padding-left: 14px; font-size: 16px; line-height: 24px; font-weight: 400; color: #3d3d3d; }
.panel-body { display: flex; height: 401px; }
.slots { width: 240px; padding: 18px 0 0 13px; overflow: hidden; }
.group { margin-bottom: 20px; }
.slot-head { display: flex; align-items: center; height: 14px; margin-bottom: 7px; }
.slot-ic { width: 13px; height: 13px; fill: #222; margin-left: 1px; }
.slot-line { fill: none; stroke: #222; stroke-width: 1; }
.slot-hole { fill: #fff; }
.slot-name { margin-left: 7px; font-size: 11.500px; color: #555; }
.slot-name.strong { font-weight: 600; color: #3d3d3d; }
.req { font-style: normal; color: #d4242f; }
.slot-note { margin-left: auto; font-size: 9.500px; color: #555; }
.pill { display: flex; align-items: center; background: #f3f3f3; }
.pill.tall { height: 46px; align-items: flex-start; padding-top: 6px; }
.pill.short { height: 33px; }
.grip { width: 6px; height: 10px; margin: 0 10px 0 11px; fill: #555; }
.tall .grip { margin-top: 9px; }
.pill-main { flex: 1; padding-right: 6px; }
.pill-top { display: flex; align-items: center; justify-content: space-between; height: 14px; padding-right: 13px; }
.pill-top.wide { flex: 1; padding-right: 19px; }
.pill-name { font-size: 11.500px; font-weight: 600; color: #3d3d3d; }
.pill-plain { font-size: 11px; color: #555; }
.kebab { width: 4px; height: 10px; fill: #333; }
.pill-sub { display: flex; align-items: center; justify-content: space-between; margin-top: 5px; font-size: 9.800px; line-height: 16px; color: #555; white-space: nowrap; }
.badge { display: flex; align-items: center; justify-content: center; flex: none; width: 16px; height: 16px; border-radius: 50%; background: #3a3a3a; color: #fff; font-size: 8.500px; }
.drop { display: flex; align-items: center; justify-content: center; height: 34px; margin-top: 7px; border: 1px dashed #8a8a8a; font-size: 9.800px; color: #a8a8a8; }
.slot-head + .drop { margin-top: 0; }
.scrollbar { display: flex; flex-direction: column; width: 14px; margin-left: 13px; background: #f1f1f1; }
.arrow { position: relative; height: 14px; }
.arrow::after { content: ""; position: absolute; left: 4px; top: 5px; border: 3px solid transparent; }
.arrow.up::after { border-bottom-color: #a8a8a8; top: 2px; }
.arrow.down::after { border-top-color: #505050; top: 6px; }
.thumb { height: 232px; margin: 0 1px; background: #c1c1c1; }
.track { flex: 1; }

.dock { display: flex; justify-content: center; height: 7px; padding-top: 2px; background: #ececec; padding-left: 40px; }
.dock-handle { width: 13px; height: 4px; border-top: 1px solid #777; border-bottom: 1px solid #777; }
```
